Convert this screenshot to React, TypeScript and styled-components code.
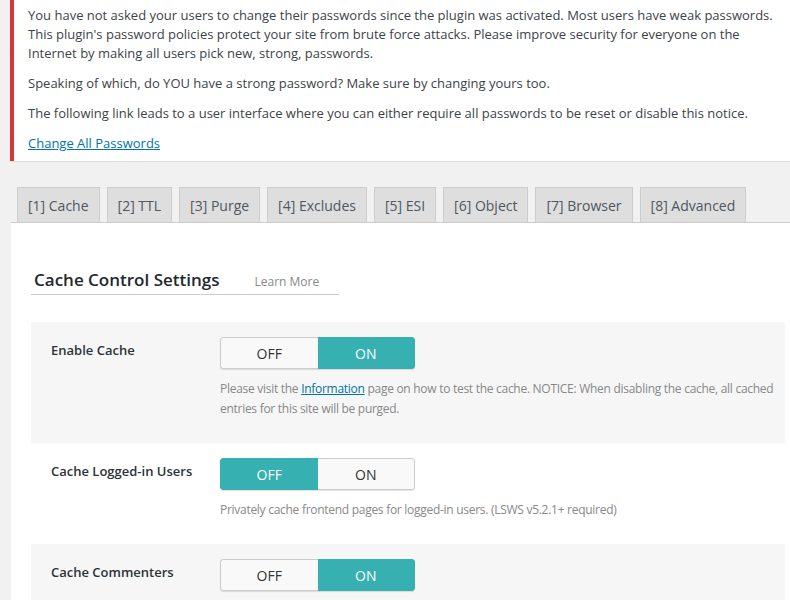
import React from 'react';
import styled, { createGlobalStyle } from 'styled-components';

const GlobalStyle = createGlobalStyle`
  html, body {
    margin: 0;
    padding: 0;
    background: #f1f1f1;
    font-family: "Open Sans", "Noto Sans", sans-serif;
    color: #3c434a;
    overflow: hidden;
  }
`;

const Page = styled.div`
  width: 790px;
  height: 600px;
  padding-left: 10px;
  box-sizing: border-box;
  overflow: hidden;
`;

const Notice = styled.div`
  background: #fff;
  border-left: 4px solid #d63638;
  box-shadow: 0 1px 1px rgba(0, 0, 0, 0.08);
  padding: 6px 0 8px 14px;
  margin-right: -40px;
`;

const NoticeText = styled.p<{ gap?: number }>`
  margin: ${(p) => (p.gap ?? 0)}px 0 0;
  max-width: 756px;
  font-size: 13px;
  line-height: 19px;
  color: #3c434a;
`;

const Link = styled.a`
  color: #0073aa;
  text-decoration: underline;
`;

const TabNav = styled.div`
  display: flex;
  gap: 7px;
  margin: 26px 0 0 7px;
  position: relative;
  z-index: 1;
`;

const Tab = styled.div`
  height: 34px;
  padding: 0 10px;
  display: flex;
  align-items: center;
  background: #dedede;
  border: 1px solid #ccc;
  border-bottom: none;
  font-size: 14px;
  color: #50575e;
  white-space: nowrap;
`;

const Panel = styled.div`
  background: #fff;
  border-top: 1px solid #ccc;
  margin-left: 1px;
  padding: 45px 5px 0 20px;
  height: 400px;
`;

const TitleBar = styled.div`
  display: inline-flex;
  align-items: baseline;
  padding: 0 20px 2px 3px;
  border-bottom: 1px solid #ccc;
`;

const Title = styled.h3`
  margin: 0;
  font-size: 17px;
  line-height: 24px;
  font-weight: 600;
  color: #23282d;
`;

const LearnMore = styled.span`
  margin-left: 35px;
  font-size: 12px;
  color: #888;
`;

const Table = styled.div`
  margin-top: 27px;
`;

const Row = styled.div<{ shaded?: boolean }>`
  display: grid;
  grid-template-columns: 169px 1fr;
  padding: 15px 0 24px 20px;
  background: ${(p) => (p.shaded ? '#f6f6f6' : '#fff')};
`;

const Label = styled.div`
  font-size: 13px;
  font-weight: 600;
  color: #2c3338;
  line-height: 18px;
  padding-top: 4px;
`;

const Field = styled.div``;

const Toggle = styled.div`
  display: flex;
  width: 195px;
  height: 32px;
  border-radius: 3px;
  overflow: hidden;
  box-shadow: 0 1px 1px rgba(0, 0, 0, 0.12);
`;

const ToggleHalf = styled.div<{ active?: boolean; side: 'left' | 'right' }>`
  flex: 1;
  display: flex;
  align-items: center;
  justify-content: center;
  font-size: 14px;
  box-sizing: border-box;
  background: ${(p) => (p.active ? '#36b0b0' : '#f9f9f9')};
  color: ${(p) => (p.active ? '#fff' : '#333')};
  border: 1px solid ${(p) => (p.active ? '#36b0b0' : '#ccc')};
  ${(p) => (p.side === 'left' ? 'border-radius: 3px 0 0 3px;' : 'border-radius: 0 3px 3px 0;')}
  ${(p) => (p.side === 'left' ? 'border-right: none;' : 'border-left: none;')}
`;

const Desc = styled.div`
  margin-top: 10px;
  font-size: 12px;
  letter-spacing: -0.28px;
  line-height: 20px;
  color: #888;
`;

const InfoLink = styled.a`
  color: #0073aa;
  text-decoration: underline;
`;

const tabs = ['[1] Cache', '[2] TTL', '[3] Purge', '[4] Excludes', '[5] ESI', '[6] Object', '[7] Browser', '[8] Advanced'];

const Switch: React.FC<{ on: boolean }> = ({ on }) => (
  <Toggle>
    <ToggleHalf side="left" active={!on}>OFF</ToggleHalf>
    <ToggleHalf side="right" active={on}>ON</ToggleHalf>
  </Toggle>
);

export default function App() {
  return (
    <Page>
      <GlobalStyle />
      <Notice>
        <NoticeText>
          You have not asked your users to change their passwords since the plugin was activated. Most users have weak passwords.
          This plugin's password policies protect your site from brute force attacks. Please improve security for everyone on the
          Internet by making all users pick new, strong, passwords.
        </NoticeText>
        <NoticeText gap={11}>Speaking of which, do YOU have a strong password? Make sure by changing yours too.</NoticeText>
        <NoticeText gap={11}>
          The following link leads to a user interface where you can either require all passwords to be reset or disable this notice.
        </NoticeText>
        <NoticeText gap={11}>
          <Link href="#">Change All Passwords</Link>
        </NoticeText>
      </Notice>
      <TabNav>
        {tabs.map((t) => (
          <Tab key={t}>{t}</Tab>
        ))}
      </TabNav>
      <Panel>
        <TitleBar>
          <Title>Cache Control Settings</Title>
          <LearnMore>Learn More</LearnMore>
        </TitleBar>
        <Table>
          <Row shaded>
            <Label>Enable Cache</Label>
            <Field>
              <Switch on />
              <Desc>
                Please visit the <InfoLink href="#">Information</InfoLink> page on how to test the cache. NOTICE: When disabling the
                cache, all cached entries for this site will be purged.
              </Desc>
            </Field>
          </Row>
          <Row>
            <Label>Cache Logged-in Users</Label>
            <Field>
              <Switch on={false} />
              <Desc>Privately cache frontend pages for logged-in users. (LSWS v5.2.1+ required)</Desc>
            </Field>
          </Row>
          <Row shaded>
            <Label>Cache Commenters</Label>
            <Field>
              <Switch on />
              <Desc>Privately cache commenters that have pending comments. (LSWS v5.2.1+ required)</Desc>
            </Field>
          </Row>
        </Table>
      </Panel>
    </Page>
  );
}
